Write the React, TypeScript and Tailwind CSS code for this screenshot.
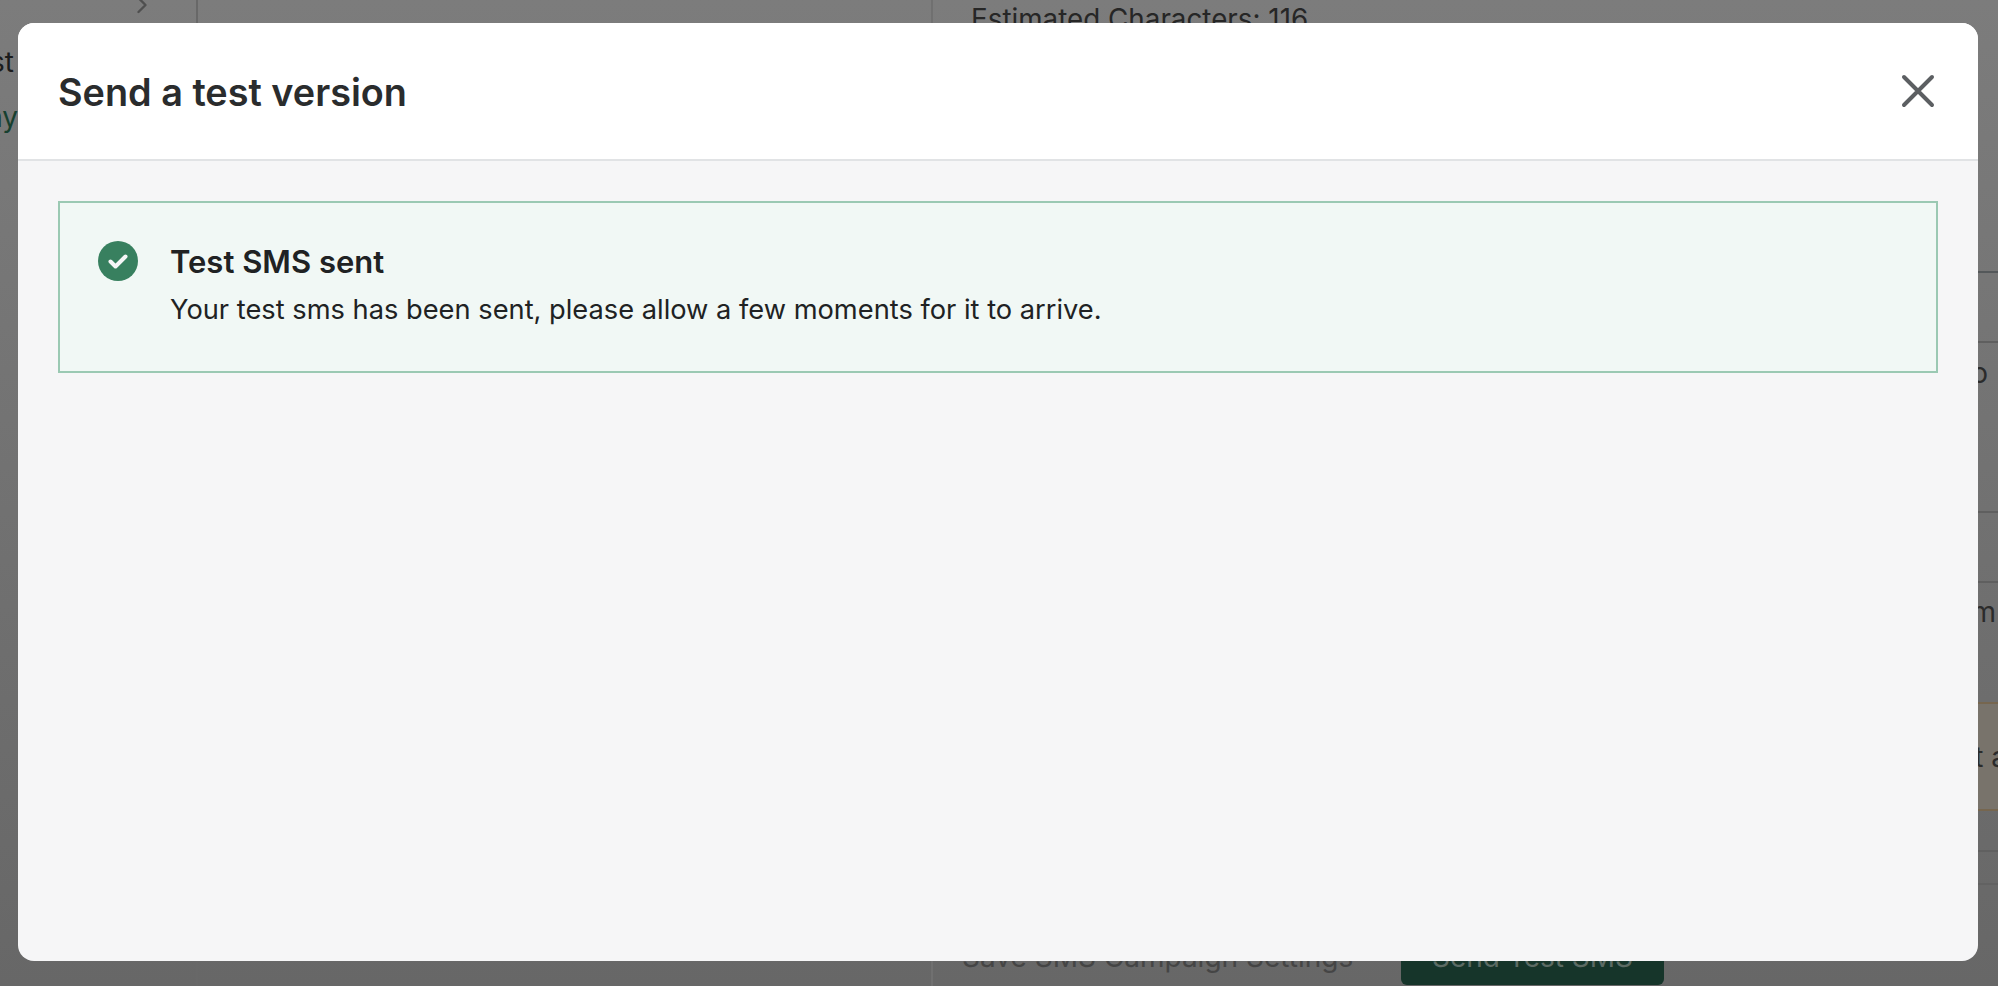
import { ChevronRight } from "lucide-react";

const rows = [
  { height: "h-[273px]", text: "", pad: "", color: "border-[#54585a]", bg: "" },
  { height: "h-[70px]", text: "", pad: "", color: "border-[#5f5f5f]", bg: "" },
  { height: "h-[170px]", text: "o", pad: "items-start pt-[13px] pr-[10px]", color: "border-[#5f5f5f]", bg: "" },
  { height: "h-[70px]", text: "", pad: "", color: "border-[#5f5f5f]", bg: "" },
  { height: "h-[121px]", text: "m", pad: "items-start pt-[12px] pr-[2px]", color: "border-[#76664f]", bg: "" },
  { height: "h-[107px]", text: "t a", pad: "items-center", color: "border-[#76664f]", bg: "bg-[#78736b]" },
  { height: "h-[41px]", text: "", pad: "", color: "border-[#606060]", bg: "" },
  { height: "h-[33px]", text: "", pad: "", color: "border-[#626262]", bg: "" },
];

function BackgroundPage() {
  return (
    <div className="flex h-[986px] overflow-hidden bg-linear-to-b from-[#7c7c7c] to-[#676767]">
      {/* Sidebar */}
      <div className="w-[198px] shrink-0 border-r-2 border-[#686868]">
        <div className="flex justify-end pr-[40px] -mt-[9px]">
          <ChevronRight size={28} className="text-[#4f4f4f]" />
        </div>
        <div className="mt-[26px] w-[14px] overflow-hidden text-[28px] leading-[34px] text-[#1c1c1c] flex justify-end">
          st
        </div>
        <div className="mt-[21px] w-[18px] overflow-hidden text-[28px] leading-[34px] text-[#17402f] flex justify-end">
          ny
        </div>
      </div>

      {/* Middle column */}
      <div className="w-[733px] shrink-0" />

      {/* Right column */}
      <div className="relative flex-1 min-w-0 border-l-2 border-[#707070]">
        <div className="absolute left-[38px] top-[2px] whitespace-nowrap text-[27.8px] leading-[34px] text-[#262626]">
          Estimated Characters: 116
        </div>
        {rows.map((row, i) => (
          <div
            key={i}
            className={`flex justify-end overflow-hidden border-b-2 ${row.height} ${row.pad} ${row.color} ${row.bg}`}
          >
            {row.text && (
              <span className={`text-[28px] leading-[34px] text-[#2b2b2b] whitespace-nowrap ${row.text === "t a" ? "-mr-[9px]" : ""}`}>
                {row.text}
              </span>
            )}
          </div>
        ))}
        {/* Footer buttons */}
        <div className="absolute left-[29px] top-[933px] flex gap-[44px]">
          <div className="flex h-[48px] w-[395px] items-center whitespace-nowrap text-[28px] text-[#454545]">
            Save SMS Campaign Settings
          </div>
          <div className="flex h-[52px] w-[263px] justify-center rounded-[6px] bg-[#16352a] pt-[7px] text-[28px] leading-[34px] text-[#5c6b64]">
            Send Test SMS
          </div>
        </div>
      </div>
    </div>
  );
}

export default function App() {
  return (
    <div className="relative h-[986px] overflow-hidden font-['Inter',sans-serif]">
      <BackgroundPage />

      {/* Modal */}
      <div className="absolute inset-0 pl-[18px] pt-[23px]">
        <div className="flex h-[938px] w-[1960px] flex-col overflow-hidden rounded-[16px] bg-[#f6f6f7]">
          <div className="flex h-[138px] shrink-0 items-center justify-between border-b-2 border-[#e1e3e5] bg-white pl-[40px] pr-[42px]">
            <h2 className="pt-[2px] text-[37.8px] font-semibold leading-[48px] text-[#2a2c2d]">Send a test version</h2>
            <svg width="36" height="36" viewBox="0 0 36 36" fill="none" stroke="#5c5f62" strokeWidth="4" strokeLinecap="round">
              <path d="M4 4 L32 32 M32 4 L4 32" />
            </svg>
          </div>
          <div className="p-[40px]">
            <div className="flex h-[172px] gap-[32px] border-2 border-[#9bc9b3] bg-[#f1f8f5] pl-[38px] pt-[38px]">
              <svg width="40" height="40" viewBox="0 0 40 40" className="shrink-0">
                <circle cx="20" cy="20" r="20" fill="#38805f" />
                <path d="M12.5 20.5 L17.5 25.5 L27.5 15.5" fill="none" stroke="#f6f6f7" strokeWidth="4" strokeLinecap="round" strokeLinejoin="round" />
              </svg>
              <div className="pt-[1px] text-[#202223]">
                <div className="text-[31px] font-semibold leading-[40px]">Test SMS sent</div>
                <div className="mt-[8px] text-[27.25px] leading-[40px]">
                  Your test sms has been sent, please allow a few moments for it to arrive.
                </div>
              </div>
            </div>
          </div>
        </div>
      </div>
    </div>
  );
}
